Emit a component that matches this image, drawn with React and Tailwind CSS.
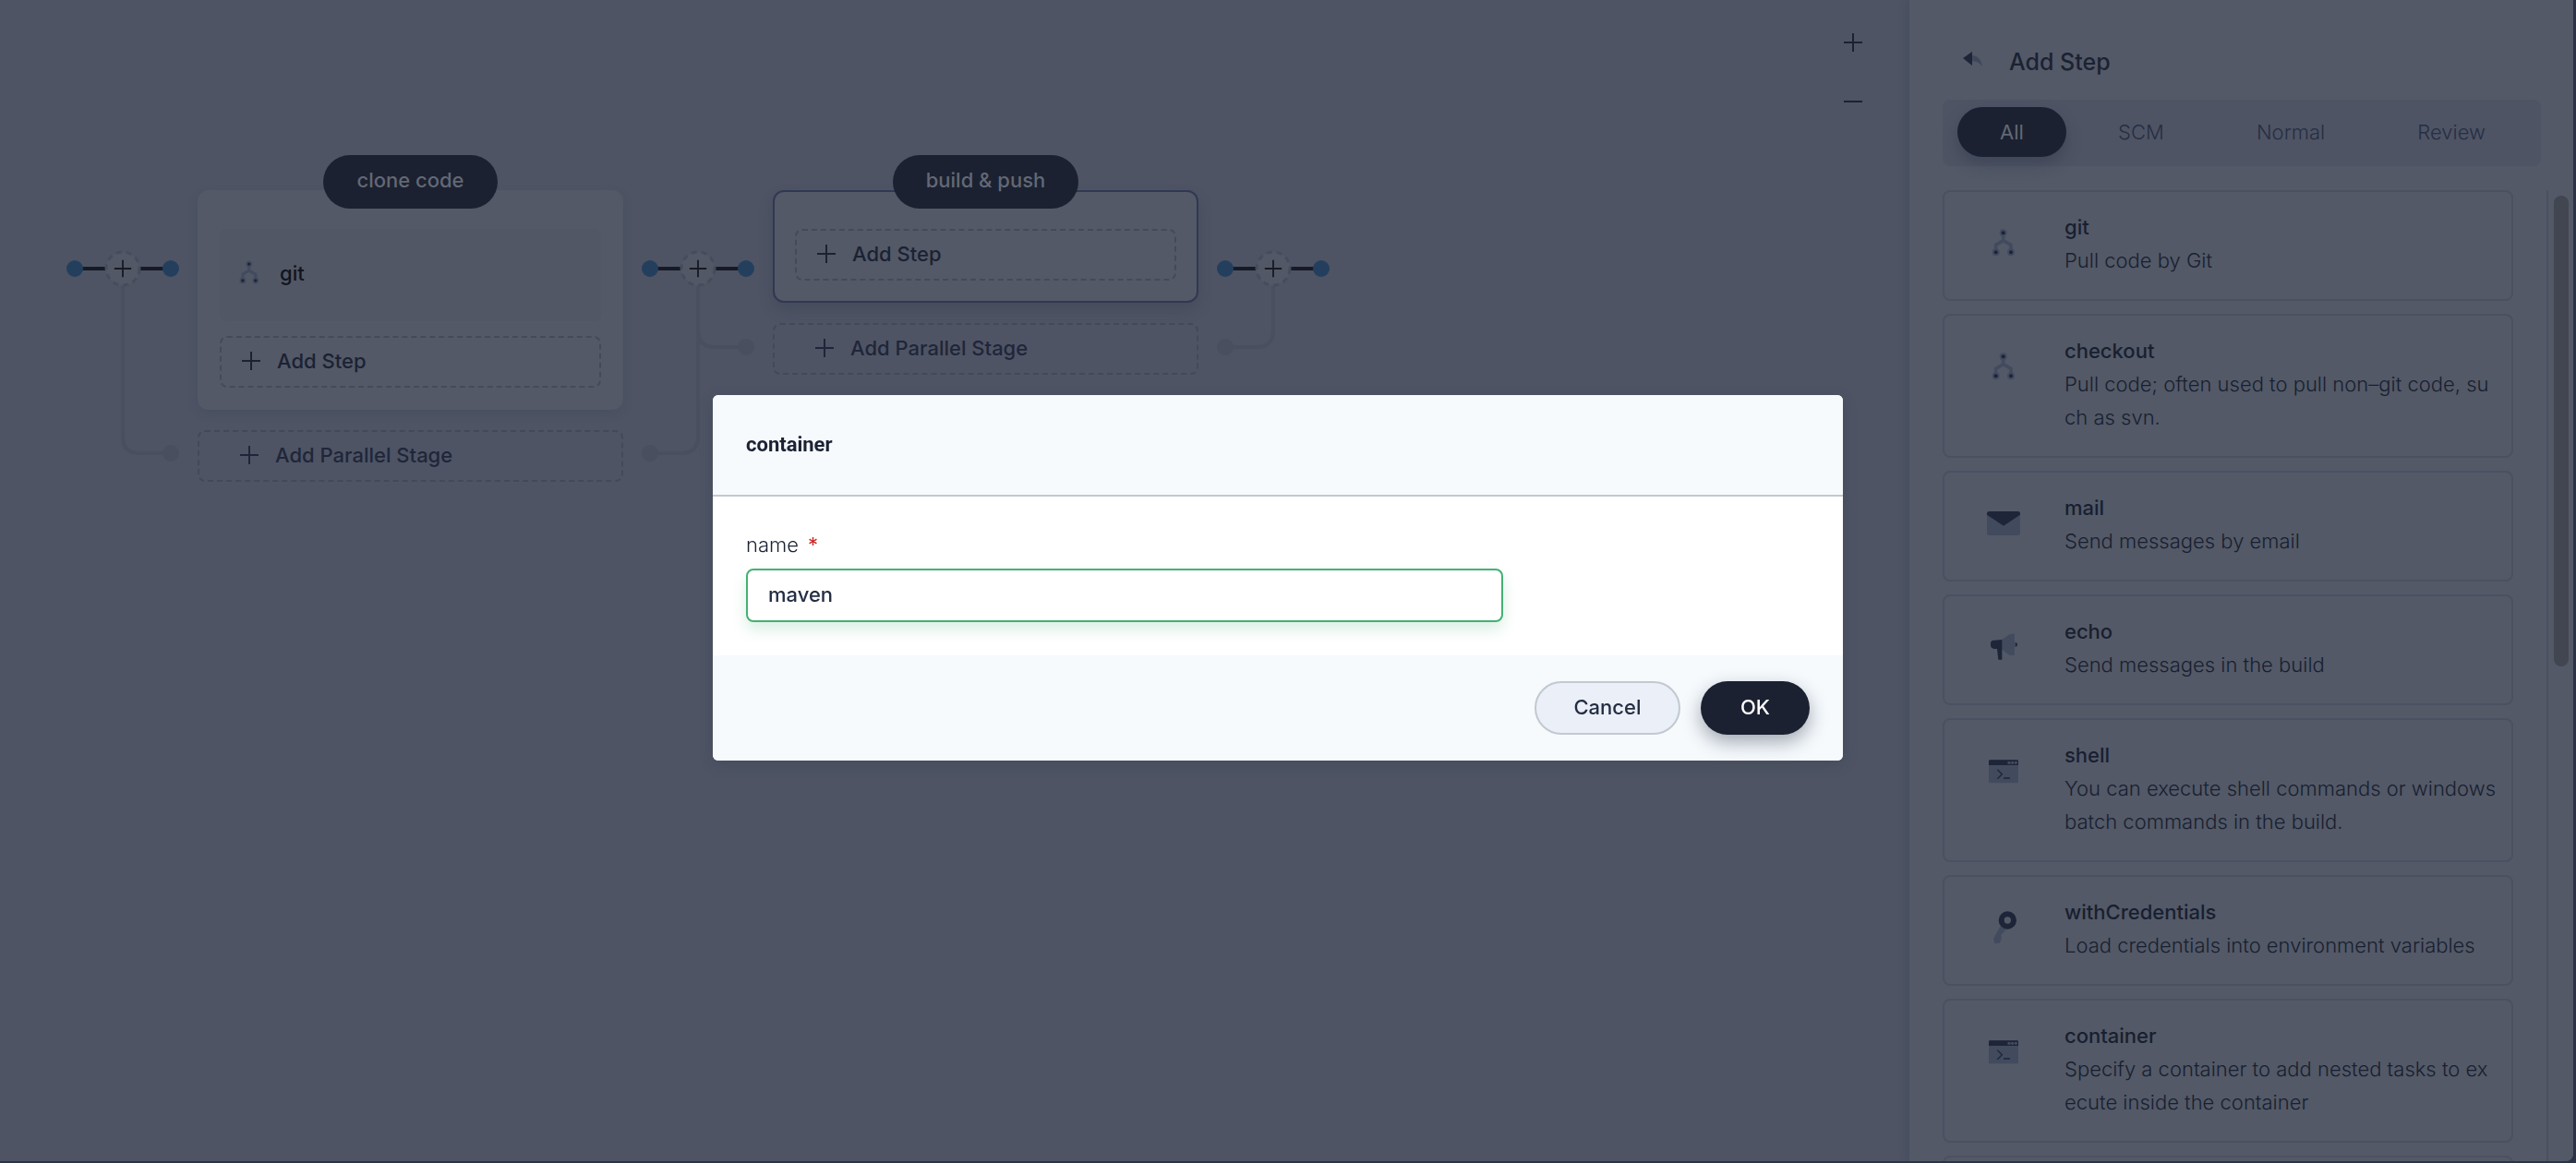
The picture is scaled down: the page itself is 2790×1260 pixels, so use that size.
import React from "react";

const LIGHT = "#424b5e";
const DARK = "#1f2539";

function GitIcon({ className }) {
  return (
    <svg viewBox="0 0 120 120" className={className} aria-hidden="true">
      <path d="M59 25V50L35 64V88M59 50L84 64V88" fill="none" stroke={LIGHT} strokeWidth="11" />
      {[[59, 25], [35, 88], [84, 88]].map(([x, y]) => (
        <g key={x}>
          <circle cx={x} cy={y} r="12" fill={LIGHT} />
          <circle cx={x} cy={y} r="6" fill="#1b2436" />
        </g>
      ))}
    </svg>
  );
}

function MailIcon({ className }) {
  return (
    <svg viewBox="0 0 120 120" className={className} aria-hidden="true">
      <rect x="6" y="18" width="108" height="78" rx="8" fill={LIGHT} />
      <path d="M6 29V26q0-8 8-8h92q8 0 8 8v3L60 65z" fill={DARK} />
    </svg>
  );
}

function MegaphoneIcon({ className }) {
  return (
    <svg viewBox="0 0 120 120" className={className} aria-hidden="true">
      <path d="M54 33L78 17q5-3 11-3h7v70H83q-6 0-11-5L54 64z" fill={LIGHT} />
      <path d="M55 33v65H43L39 63H30q-12-2-12-12v-6q0-9 10-10z" fill={DARK} />
      <path d="M98 41q7 2 7 8t-7 8z" fill={DARK} />
    </svg>
  );
}

function TerminalIcon({ className }) {
  return (
    <svg viewBox="0 0 120 120" className={className} aria-hidden="true">
      <rect x="12" y="22" width="96" height="75" rx="4" fill={LIGHT} />
      <path d="M12 39V26q0-4 4-4h88q4 0 4 4v13z" fill={DARK} />
      {[78, 89, 100].map((x) => (
        <circle key={x} cx={x} cy="31" r="5" fill={LIGHT} />
      ))}
      <path d="M40 53l15 15-15 15M60 81h21" fill="none" stroke={DARK} strokeWidth="4" />
    </svg>
  );
}

function KeyIcon({ className }) {
  return (
    <svg viewBox="0 0 120 120" className={className} aria-hidden="true">
      <path d="M50 52L27 93l4 16 17-2 5-14-1-13 17-17z" fill={LIGHT} />
      <circle cx="73" cy="33" r="20" fill="none" stroke={DARK} strokeWidth="18" />
    </svg>
  );
}

function PlusIcon({ className }) {
  return (
    <svg viewBox="0 0 24 24" className={className} aria-hidden="true">
      <path d="M2 12H22M12 2V22" stroke="currentColor" strokeWidth="2" fill="none" />
    </svg>
  );
}

const steps = [
  { name: "git", text: "Pull code by Git", Icon: GitIcon },
  { name: "checkout", text: "Pull code; often used to pull non–git code, su\nch as svn.", Icon: GitIcon },
  { name: "mail", text: "Send messages by email", Icon: MailIcon },
  { name: "echo", text: "Send messages in the build", Icon: MegaphoneIcon },
  { name: "shell", text: "You can execute shell commands or windows\nbatch commands in the build.", Icon: TerminalIcon },
  { name: "withCredentials", text: "Load credentials into environment variables", Icon: KeyIcon },
  { name: "container", text: "Specify a container to add nested tasks to ex\necute inside the container", Icon: TerminalIcon },
];

function Connector({ branches }) {
  return (
    <div className="relative w-[122px] shrink-0">
      <svg viewBox="0 0 122 300" className="block h-[300px] w-[122px]" aria-hidden="true">
        {branches.map((d) => (
          <path key={d.path} d={d.path} fill="none" stroke="#494f5f" strokeWidth="4" />
        ))}
        {branches.map((d) => (
          <circle key={d.path} cx={d.x} cy={d.y} r="9" fill="#494f5f" />
        ))}
        <path d="M9 85H42M80 85H113" stroke="#171a26" strokeWidth="4" />
        <circle cx="9" cy="85" r="9" fill="#243f5e" />
        <circle cx="113" cy="85" r="9" fill="#243f5e" />
        <circle cx="61" cy="85" r="18" fill="#525866" stroke="#464c5c" strokeWidth="3" strokeDasharray="6 5" />
      </svg>
      <button
        type="button"
        aria-label="Add stage"
        className="absolute left-[43px] top-[67px] flex h-9 w-9 items-center justify-center rounded-full text-[#171a26]"
      >
        <PlusIcon className="h-[22px] w-[22px]" />
      </button>
    </div>
  );
}

function Stage({ name, active, children }) {
  return (
    <div className="flex w-[461px] shrink-0 flex-col gap-[22px]">
      <section
        className={
          active
            ? "flex flex-col items-center rounded-xl border-2 border-[#313852] bg-[#535967] px-[22px] pb-[22px] shadow-[0_8px_16px_rgba(36,46,66,0.2)]"
            : "flex flex-col items-center rounded-xl border-2 border-[#535967] bg-[#535967] px-[22px] pb-[22px] shadow-[0_4px_12px_rgba(36,46,66,0.12)]"
        }
      >
        <h2 className="-mt-10 h-[58px] rounded-full bg-[#1b2130] px-9 text-[22px] font-medium leading-[54px] text-[#626876]">
          {name}
        </h2>
        <div className="mt-[22px] flex w-full flex-col gap-4">{children}</div>
      </section>
      <button
        type="button"
        className="flex h-14 items-center gap-4 rounded-lg border-2 border-dashed border-[#434958] pb-0.5 pl-[42px] text-[22px] font-medium text-[#1f2639]"
      >
        <PlusIcon className="h-6 w-6" />
        Add Parallel Stage
      </button>
    </div>
  );
}

function AddStepButton() {
  return (
    <button
      type="button"
      className="flex h-14 items-center gap-4 rounded-lg border-2 border-dashed border-[#444a59] pb-0.5 pl-5 text-[22px] font-medium text-[#1b2233]"
    >
      <PlusIcon className="h-6 w-6" />
      Add Step
    </button>
  );
}

function Canvas() {
  return (
    <main className="relative min-w-0 flex-1 overflow-hidden">
      <div className="flex gap-5 pl-[72px] pt-[206px]">
        <Connector branches={[{ path: "M61 104V267Q61 285 79 285H113", x: 113, y: 285 }]} />
        <Stage name="clone code">
          <div className="flex h-[100px] items-center gap-4 rounded-lg bg-[#515765] pb-1 pl-[15px] text-[22px] font-medium text-[#10141f]">
            <GitIcon className="h-[34px] w-[34px]" />
            git
          </div>
          <AddStepButton />
        </Stage>
        <Connector
          branches={[
            { path: "M61 104V152Q61 170 79 170H113", x: 113, y: 170 },
            { path: "M61 104V267Q61 285 43 285H9", x: 9, y: 285 },
          ]}
        />
        <Stage name="build & push" active>
          <AddStepButton />
        </Stage>
        <Connector branches={[{ path: "M61 104V152Q61 170 43 170H9", x: 9, y: 170 }]} />
      </div>
      <div className="absolute right-[49px] top-[34px] flex flex-col gap-10 text-[#1b2233]">
        <button type="button" aria-label="Zoom in">
          <PlusIcon className="h-6 w-6" />
        </button>
        <button type="button" aria-label="Zoom out">
          <svg viewBox="0 0 24 24" className="h-6 w-6" aria-hidden="true">
            <path d="M2 12H22" stroke="currentColor" strokeWidth="2" />
          </svg>
        </button>
      </div>
    </main>
  );
}

function StepPanel() {
  return (
    <aside className="flex w-[719px] shrink-0 flex-col bg-[#535967] pl-9 shadow-[-4px_0_8px_rgba(36,46,66,0.15)]">
      <header className="flex h-[108px] items-center gap-6 pl-5 pt-[26px] text-[#1b2233]">
        <button type="button" aria-label="Back">
          <svg viewBox="0 0 28 28" className="-mt-1 h-7 w-7" aria-hidden="true">
            <path d="M11 9q10 0 12 12q-4-6-12-6z" fill="#3f485b" />
            <path d="M2 12L12 5V20z" fill={DARK} />
          </svg>
        </button>
        <h1 className="text-[25px] font-medium leading-8">Add Step</h1>
      </header>
      <div
        role="tablist"
        className="mr-[35px] flex h-[72px] items-center justify-between rounded-lg bg-[#4e5464] px-4 pb-0.5 text-[22px] text-[#262e43]"
      >
        <button
          type="button"
          role="tab"
          aria-selected="true"
          className="h-[54px] rounded-full bg-[#1b2130] px-[46px] text-[#626876] shadow-[0_8px_16px_rgba(36,46,66,0.35)]"
        >
          All
        </button>
        <button type="button" role="tab" aria-selected="false" className="h-[54px] px-11 font-light">SCM</button>
        <button type="button" role="tab" aria-selected="false" className="h-[54px] px-11 font-light">Normal</button>
        <button type="button" role="tab" aria-selected="false" className="h-[54px] px-11 font-light">Review</button>
      </div>
      <div className="mt-[26px] flex min-h-0 flex-1">
        <ul className="mr-9 flex min-w-0 flex-1 flex-col gap-3.5 overflow-hidden">
          {steps.map(({ name, text, Icon }) => (
            <li
              key={name}
              className="flex shrink-0 gap-[46px] rounded-lg border-2 border-[#4b5161] pb-6 pl-11 pt-5 text-[22px] leading-9 text-[#181f30]"
            >
              <Icon className="mt-4 h-10 w-10 shrink-0" />
              <div>
                <h3 className="font-medium">{name}</h3>
                <p className="whitespace-pre font-light">{text}</p>
              </div>
            </li>
          ))}
          <li className="h-[120px] shrink-0 rounded-lg border-2 border-[#4b5161]" />
        </ul>
        <div className="w-[29px] border-l-2 border-[#4b5161] pl-1.5 pt-1.5">
          <div className="h-[510px] w-4 rounded-full bg-[#414651]" />
        </div>
      </div>
    </aside>
  );
}

function ContainerDialog() {
  return (
    <div className="fixed inset-0 flex items-center justify-center pb-2 pr-[22px]">
      <form
        role="dialog"
        aria-labelledby="dialog-title"
        className="w-[1224px] overflow-hidden rounded-md bg-white text-[22px] shadow-[0_4px_16px_rgba(36,46,66,0.2)]"
      >
        <header className="border-b-2 border-[#c1c9d1] bg-[#f6fafd] px-9 py-9">
          <h2 id="dialog-title" className="font-[Roboto] font-bold leading-9 text-[#1b2233]">
            container
          </h2>
        </header>
        <div className="flex flex-col px-9 pb-9 pt-[34px]">
          <label htmlFor="container-name" className="mb-2 flex gap-2.5 font-light leading-9 text-[#1b2233]">
            name
            <span className="font-normal text-[#ca2621]">*</span>
          </label>
          <input
            id="container-name"
            type="text"
            defaultValue="maven"
            className="h-[58px] w-[820px] rounded-lg border-2 border-[#45b074] bg-white px-[22px] pb-0.5 font-medium text-[#242e42] shadow-[0_8px_16px_rgba(72,177,120,0.2)] outline-none"
          />
        </div>
        <footer className="flex justify-end gap-[22px] bg-[#f6fafd] px-9 py-7">
          <button
            type="button"
            className="h-[58px] w-[158px] rounded-full border-2 border-[#c1c9d1] bg-[#ebeff7] pb-0.5 font-medium text-[#242e42]"
          >
            Cancel
          </button>
          <button
            type="button"
            className="h-[58px] w-[118px] rounded-full bg-[#1b2130] pb-0.5 font-medium text-white shadow-[0_8px_20px_rgba(36,46,66,0.4)]"
          >
            OK
          </button>
        </footer>
      </form>
    </div>
  );
}

export default function App() {
  return (
    <div className="h-screen bg-[#2d3346] pb-0.5 pr-[3px] font-[Inter,sans-serif]">
      <div className="flex h-full overflow-hidden rounded-br-lg bg-[#4e5464]">
        <Canvas />
        <StepPanel />
      </div>
      <ContainerDialog />
    </div>
  );
}
